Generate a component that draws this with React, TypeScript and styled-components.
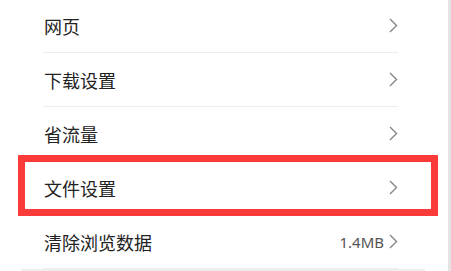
import React from 'react';
import styled, { createGlobalStyle } from 'styled-components';

const GlobalStyle = createGlobalStyle`
  html, body {
    margin: 0;
    padding: 0;
    background: #ffffff;
    overflow: hidden;
  }
  body {
    font-family: "Noto Sans CJK SC", "Noto Sans", sans-serif;
  }
`;

const Page = styled.div`
  display: flex;
  width: 451px;
  height: 271px;
  overflow: hidden;
  background: #ffffff;
`;

const Panel = styled.div`
  width: 404px;
  margin-left: 21px;
  margin-top: -1px;
  display: flex;
  flex-direction: column;
`;

const List = styled.ul`
  list-style: none;
  margin: 0;
  padding: 0 27px 0 22px;
  background: #ffffff;
`;

const Footer = styled.div`
  height: 3px;
  background: #eeeeee;
`;

const Row = styled.li`
  position: relative;
  display: flex;
  align-items: center;
  height: 53px;
  border-bottom: 1px solid #ededed;
`;

const Label = styled.span`
  flex: 1;
  margin-left: 1px;
  font-size: 18px;
  color: #222222;
`;

const Extra = styled.span`
  font-family: "Noto Sans", sans-serif;
  font-size: 15px;
  color: #555555;
  margin-right: 5px;
`;

const Highlight = styled.div`
  position: absolute;
  left: -25px;
  right: -40px;
  top: -6px;
  bottom: -2px;
  border: 7px solid #fb3a3a;
  pointer-events: none;
`;

const Scrollbar = styled.div`
  margin-left: auto;
  width: 3px;
  height: 271px;
  background: #e4e4e4;
`;

const Chevron: React.FC = () => (
  <svg width="9" height="15" viewBox="0 0 9 15" fill="none">
    <path d="M1 1 L7.5 7.5 L1 14" stroke="#858585" strokeWidth="1.4" />
  </svg>
);

interface Item {
  label: string;
  extra?: string;
  marked?: boolean;
}

const items: Item[] = [
  { label: '网页' },
  { label: '下载设置' },
  { label: '省流量' },
  { label: '文件设置', marked: true },
  { label: '清除浏览数据', extra: '1.4MB' },
];

const App: React.FC = () => (
  <>
    <GlobalStyle />
    <Page>
      <Panel>
        <List>
          {items.map((item) => (
            <Row key={item.label}>
              <Label>{item.label}</Label>
              {item.extra && <Extra>{item.extra}</Extra>}
              <Chevron />
              {item.marked && <Highlight />}
            </Row>
          ))}
        </List>
        <Footer />
      </Panel>
      <Scrollbar />
    </Page>
  </>
);

export default App;
